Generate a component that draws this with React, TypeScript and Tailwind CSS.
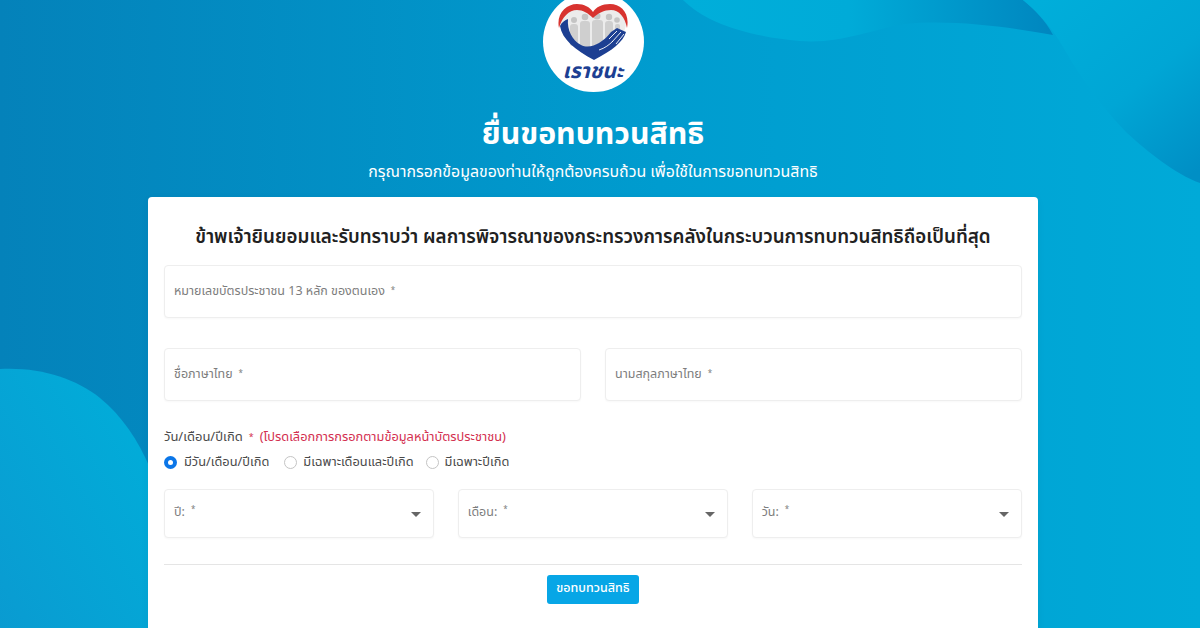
import React from "react";

const thai = "font-['Noto_Sans_Thai','Noto_Sans','Noto_Sans_CJK_SC',sans-serif]";

function Field({ label, className = "" }: { label: string; className?: string }) {
  return (
    <div className={`flex h-[53px] items-center rounded border border-[#eeeeee] bg-white pl-[9px] pt-[2px] text-[12.5px] text-[#7d7d7d] shadow-[0_1px_2px_rgba(0,0,0,0.03)] ${className}`}>
      <span>{label}</span>
      <span className="-mt-1 ml-[6px] text-[8px]">*</span>
    </div>
  );
}

function SelectField({ label }: { label: string }) {
  return (
    <div className="relative flex h-[49px] flex-1 rounded border border-[#eeeeee] bg-white pl-[9px] pt-[14px] text-[12.5px] text-[#7d7d7d] shadow-[0_1px_2px_rgba(0,0,0,0.03)]">
      <span>{label}</span>
      <span className="ml-[6px] text-[8px]">*</span>
      <div className="absolute right-[12px] top-[22px] h-0 w-0 border-x-[5px] border-t-[5px] border-x-transparent border-t-[#666666]" />
    </div>
  );
}

function Radio({ label, on, className = "" }: { label: string; on?: boolean; className?: string }) {
  return (
    <div className={`flex items-center ${className}`}>
      {on ? (
        <div className="flex h-[13px] w-[13px] items-center justify-center rounded-full bg-[#0b76e8]">
          <div className="h-[5px] w-[5px] rounded-full bg-white" />
        </div>
      ) : (
        <div className="h-[13px] w-[13px] rounded-full border border-[#c4c4c4] bg-white" />
      )}
      <span>{label}</span>
    </div>
  );
}

function Logo() {
  return (
    <svg width="72" height="58" viewBox="0 0 72 58">
      <path d="M36 55 C16 44 3 33 3 18 C3 8 11 2 20 2 C27 2 33 5 36 9 C39 5 45 2 52 2 C61 2 69 8 69 18 C69 33 56 44 36 55 Z" fill="#ececec" />
      {/* people */}
      <g fill="#cfcfcf">
        <rect x="13" y="20" width="8" height="22" rx="3" />
        <rect x="23" y="17" width="10" height="28" rx="3" />
        <rect x="35" y="16" width="11" height="28" rx="3" />
        <rect x="48" y="17" width="8" height="20" rx="3" />
        <rect x="58" y="20" width="5" height="12" rx="2" />
      </g>
      <g fill="#c4c4c4">
        <circle cx="17" cy="16" r="3" />
        <circle cx="28" cy="13" r="3.3" />
        <circle cx="40" cy="12" r="3.5" />
        <circle cx="52" cy="13" r="3.2" />
        <circle cx="60" cy="16" r="2.8" />
      </g>
      {/* red arcs */}
      <path d="M2 24 C-1 10 9 0 20 0 C27 0 33 3 36 8 C39 3 45 0 53 0 C64 0 73 9 70 24 C68 13 62 6 54 6 C47 6 41 9 36 14 C31 9 26 6 20 6 C12 6 5 13 2 24 Z" fill="#d8332f" />
      {/* blue crescent and hand */}
      <path d="M3 22 C5 18 8 16 11 15 C10 26 15 36 24 41 C30 44 37 42 42 39 C47 36 51 32 54 28 L60 24 L69 28 C66 38 56 46 37 56 C18 46 5 35 3 22 Z" fill="#1d3f92" />
      <path d="M52 35 L60 27 M55 38 L64 28 M59 40 L67 30 M42 46 C48 44 52 41 56 37" stroke="#ffffff" strokeWidth="0.9" fill="none" />
    </svg>
  );
}

export default function App() {
  return (
    <div className={`relative h-[628px] w-[1200px] overflow-hidden bg-[linear-gradient(90deg,#0482ba,#009ccf_55%,#00aad8)] ${thai}`}>
      <svg className="absolute inset-0" width="1200" height="628" viewBox="0 0 1200 628">
        <defs>
          <linearGradient id="a" x1="0" y1="0" x2="1" y2="0">
            <stop offset="0" stopColor="#00aeda" />
            <stop offset="0.45" stopColor="#00abd8" />
            <stop offset="1" stopColor="#0086bf" />
          </linearGradient>
          <linearGradient id="b" x1="0.1" y1="0" x2="0.9" y2="1">
            <stop offset="0" stopColor="#00aeda" />
            <stop offset="0.55" stopColor="#00a6d5" />
            <stop offset="1" stopColor="#008fc5" />
          </linearGradient>
          <linearGradient id="c" x1="1" y1="0" x2="0" y2="1">
            <stop offset="0" stopColor="#00afda" />
            <stop offset="1" stopColor="#0a9bd1" />
          </linearGradient>
        </defs>
        <path d="M683 0 C705 22 745 36 800 41 C840 44 870 30 905 24 C950 19 1010 27 1053 35 C1045 20 1035 10 1023 0 Z" fill="url(#a)" />
        <path d="M1023 0 C1040 14 1052 28 1063 47 C1075 68 1095 100 1127 133 C1148 152 1175 174 1200 183 L1200 0 Z" fill="url(#b)" />
        <path d="M0 369 C40 367 75 378 100 398 C122 416 138 440 150 468 L150 628 L0 628 Z" fill="url(#c)" />
      </svg>
      <div className="relative flex w-[1186px] flex-col items-center">
        <div className="-mt-[9px] flex h-[101px] w-[101px] flex-col items-center rounded-full bg-white pt-[13px]">
          <Logo />
          <span className="-mt-[1px] text-[21px] font-bold italic leading-[22px] text-[#1d3f92]">เราชนะ</span>
        </div>
        <h1 className="mt-[21px] text-[30.3px] font-bold leading-[44px] text-white">ยื่นขอทบทวนสิทธิ</h1>
        <p className="mt-[3px] text-[15.9px] leading-[24px] text-white">กรุณากรอกข้อมูลของท่านให้ถูกต้องครบถ้วน เพื่อใช้ในการขอทบทวนสิทธิ</p>
        <main className="mt-[13px] h-[440px] w-[890px] rounded-t bg-white px-[16px] pt-[26px] shadow-[0_2px_10px_rgba(0,0,0,0.04)]">
          <h2 className="whitespace-nowrap text-center text-[18.8px] font-semibold leading-[28px] text-[#212121]">
            ข้าพเจ้ายินยอมและรับทราบว่า ผลการพิจารณาของกระทรวงการคลังในกระบวนการทบทวนสิทธิถือเป็นที่สุด
          </h2>
          <Field label="หมายเลขบัตรประชาชน 13 หลัก ของตนเอง" className="mt-[14px]" />
          <div className="mt-[30px] flex gap-[24px]">
            <Field label="ชื่อภาษาไทย" className="flex-1" />
            <Field label="นามสกุลภาษาไทย" className="flex-1" />
          </div>
          <div className="mt-[26px] flex items-center text-[13px] leading-[20px] text-[#4a4a4a]">
            <span>วัน/เดือน/ปีเกิด</span>
            <span className="ml-[6px] text-[9px] text-[#d32f4f]">*</span>
            <span className="ml-[6px] text-[12.8px] text-[#d32f4f]">(โปรดเลือกการกรอกตามข้อมูลหน้าบัตรประชาชน)</span>
          </div>
          <div className="mt-[5px] flex gap-[13px] text-[12.8px] leading-[20px] text-[#4a4a4a]">
            <Radio label="มีวัน/เดือน/ปีเกิด" on className="mr-[2px] gap-[7px]" />
            <Radio label="มีเฉพาะเดือนและปีเกิด" className="mr-[-1px] gap-[6px]" />
            <Radio label="มีเฉพาะปีเกิด" className="gap-[6px]" />
          </div>
          <div className="mt-[17px] flex gap-[23.5px]">
            <SelectField label="ปี:" />
            <SelectField label="เดือน:" />
            <SelectField label="วัน:" />
          </div>
          <div className="mt-[26px] flex flex-col items-center border-t border-[#e5e5e5] pt-[10px]">
            <button className="h-[29px] w-[92px] rounded-[3px] bg-[#07a6e6] text-[12.5px] font-medium text-white">ขอทบทวนสิทธิ</button>
          </div>
        </main>
      </div>
    </div>
  );
}
